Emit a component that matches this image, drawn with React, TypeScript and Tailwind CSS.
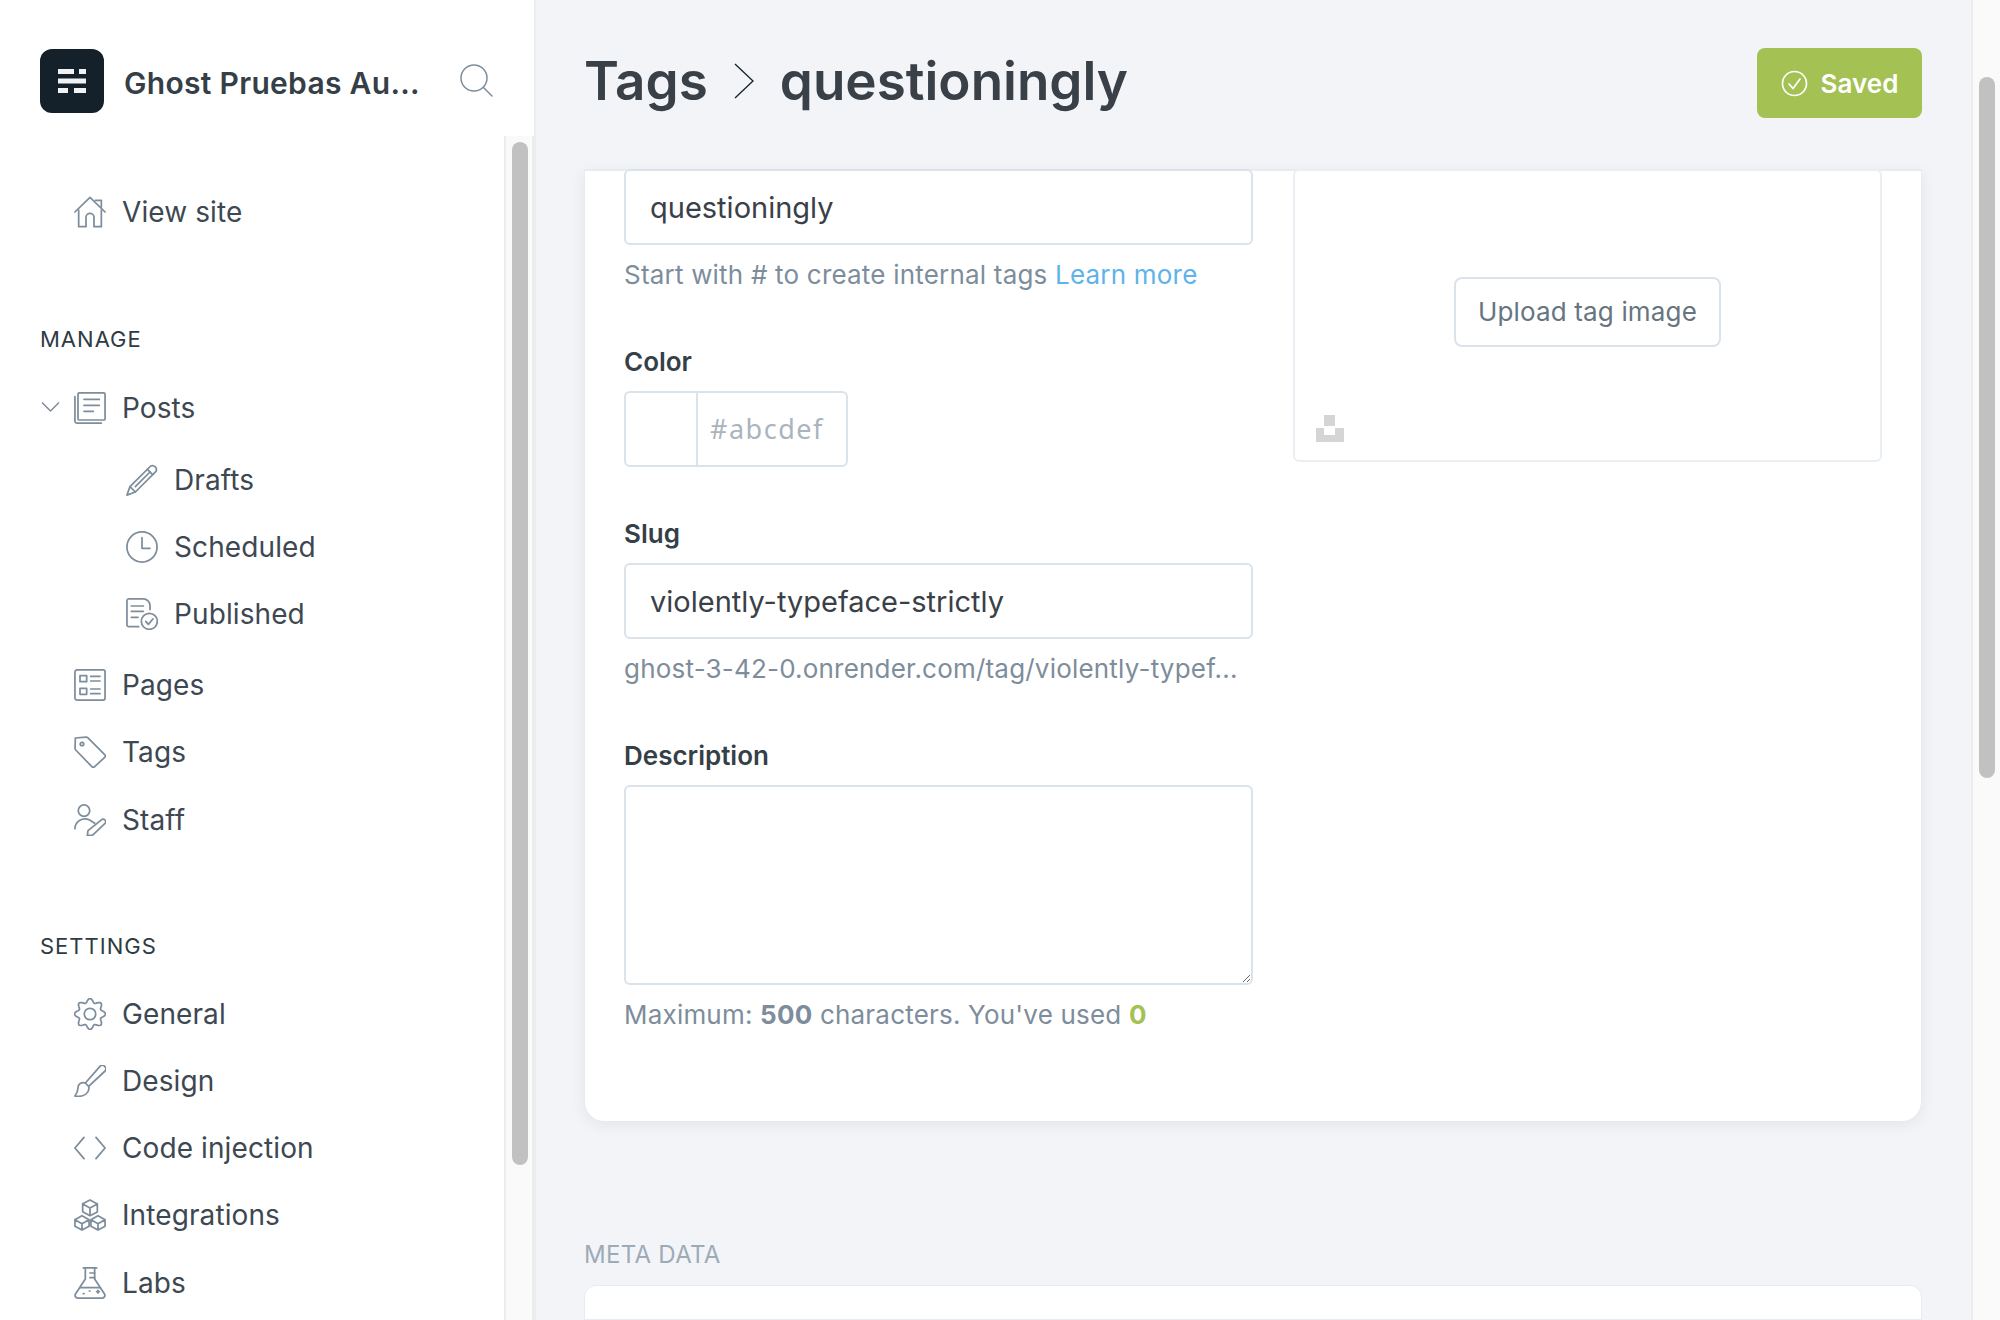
import React from "react";

const Ic = ({ children, size = 32 }: { children: React.ReactNode; size?: number }) => (
  <svg width={size} height={size} viewBox="0 0 24 24" fill="none" stroke="#7d8d9b" strokeWidth={1.3} strokeLinecap="round" strokeLinejoin="round" className="shrink-0">
    {children}
  </svg>
);

const gearPath = (() => {
  const pts: string[] = [];
  for (let i = 0; i < 120; i++) {
    const t = (i / 120) * Math.PI * 2;
    const r = 10.1 + 1.5 * Math.cos(8 * t);
    pts.push(`${(12 + r * Math.sin(t)).toFixed(2)} ${(12 - r * Math.cos(t)).toFixed(2)}`);
  }
  return `M${pts.join("L")}Z`;
})();

const icons: Record<string, React.ReactNode> = {
  home: <><path d="M.7 12 12 1l11.300 11" /><path d="M3.500 10.500V23H9v-7a3 3 0 0 1 6 0v7h5.500V10.500" /><path d="M16 3.200h4.500v5" /></>,
  posts: <><rect x="3" y=".7" width="20.300" height="20.300" rx="1" /><path d="M.7 3.500V22A1.500 1.500 0 0 0 2.200 23.300h18.300" /><path d="M7.500 5.500h11.500M7.500 10h11.500M7.500 14.500h7" /></>,
  drafts: <><path d="M18.500 1.500a3 3 0 0 1 4 4L7 21l-6.300 2.300L3 17z" /><path d="M16 4l4 4M3 17l4 4" /><path d="M7 17 18 6" /></>,
  clock: <><circle cx="12" cy="12" r="11.300" /><path d="M12 5v8h6" /></>,
  published: <><path d="M9.500 21.500H2A1.500 1.500 0 0 1 .7 20V2A1.500 1.500 0 0 1 2 .7h11a5 5 0 0 1 5 5v3" /><path d="M4 6h9M4 10h9M4 14.500h5" /><circle cx="17.500" cy="17.500" r="6" /><path d="M14.800 17.500l2 2.300 3.500-4.200" /></>,
  pages: <><rect x=".7" y=".7" width="22.600" height="22.600" rx="1.500" /><rect x="4.500" y="5" width="5" height="4.500" /><rect x="4.500" y="14.500" width="5" height="4.500" /><path d="M12.500 5.500h7M12.500 9h7M12.500 15h7M12.500 18.500h7" /></>,
  tag: <><path d="M1 1.500 9 .8a2 2 0 0 1 1.500.6l12.500 12.500a1.500 1.500 0 0 1 0 2.100l-7.500 7a1.500 1.500 0 0 1-2.100 0L1.300 10.500A2 2 0 0 1 .8 9z" /><circle cx="6" cy="6" r="1.300" /></>,
  staff: <><circle cx="7.500" cy="5" r="4.300" /><path d="M.7 18.500a7.500 7.500 0 0 1 11-6.500l3.800 2.500" /><path d="M21 11.500a2 2 0 0 1 2.500 2.800l-9.500 9-4 .5.500-3.800z" /></>,
  gear: <><circle cx="12" cy="12" r="4.300" /><path d={gearPath} /></>,
  brush: <><path d="M23 1a2.500 2.500 0 0 0-3.500 0L8.500 13.500l2.500 2.500L23.300 4.500A2.500 2.500 0 0 0 23 1z" /><path d="M8.500 13.500c-3-1-5.500 1-5.500 3.500 0 2.500-1 4.500-2.300 6.300 3.800.7 8-.3 9.800-3.300 1-2 .8-3 .5-4" /></>,
  code: <><path d="M7.500 4 .7 12l6.800 8" /><path d="M16.500 4l6.800 8-6.800 8" /></>,
  cubes: <><path d="M12 .7l5.500 3v6L12 12.500l-5.500-3v-6zM6.500 3.700 12 6.700l5.500-3M12 6.700v5.800" /><path d="M6 12.500l5.300 3v5L6 23.300.7 20.500v-5zM.7 15.500 6 18.500l5.300-3M6 18.500v4.800" /><path d="M18 12.500l5.300 3v5L18 23.300l-5.300-2.800v-5zM12.700 15.500l5.300 3 5.300-3M18 18.500v4.800" /></>,
  lab: <><path d="M7 .7h10M8.500.7v8.300L1 20.500a2 2 0 0 0 1.700 2.800h18.600a2 2 0 0 0 1.700-2.800L15.500 9V.7" /><path d="M15.500 4.500H12M15.500 8H12M4.500 15.500h15" /><path d="M17 18.500h2M18 17.500v2M11.500 18h.5M7 20h.5" /></>,
};

const Row = ({ icon, label, sub, h = "h-[67px]" }: { icon: string; label: string; sub?: boolean; h?: string }) => (
  <div className={`flex items-center ${h} ${sub ? "pl-[126px]" : "pl-[74px]"} gap-[16px] text-[28px] tracking-[0.1px] text-[#3d4852]`}>
    <Ic>{icons[icon]}</Ic>
    <span>{label}</span>
  </div>
);

const Heading = ({ children, className }: { children: React.ReactNode; className: string }) => (
  <div className={`pl-[40px] text-[22px] leading-[28px] tracking-[1px] text-[#2f3a42] ${className}`}>{children}</div>
);

const Field = "w-[629px] rounded-[6px] border-2 border-[#dae3ea] bg-white outline-none";
const Help = "text-[26px] leading-[32px] tracking-[0.2px] text-[#7d8d9b]";
const Label = "text-[26px] leading-[32px] font-semibold text-[#353f47]";

export default function App() {
  return (
    <div className="flex h-[1320px] w-[2000px] overflow-hidden bg-[#f3f4f8] [font-family:Inter,'Noto_Sans',sans-serif]">
      <aside className="flex h-full w-[536px] shrink-0 flex-col border-r-2 border-[#ebeef1] bg-white">
        <div className="flex h-[136px] shrink-0 items-start pl-[40px] pt-[49px]">
          <div className="flex h-[64px] w-[64px] items-center justify-center rounded-[12px] bg-[#15212a]">
            <svg width="30" height="30" viewBox="0 0 30 30" fill="#f0f2f4">
              <rect x="1" y="3" width="16" height="5" />
              <rect x="22" y="3" width="7" height="5" />
              <rect x="1" y="12.500" width="28" height="5" />
              <rect x="1" y="22" width="10" height="5" />
              <rect x="17" y="22" width="12" height="5" />
            </svg>
          </div>
          <div className="ml-[20px] mt-[16px] text-[30px] font-semibold leading-[36px] tracking-[0.3px] text-[#353f47]">Ghost Pruebas Au...</div>
          <svg className="ml-[40px] mt-[15px]" width="33" height="33" viewBox="0 0 33 33" fill="none" stroke="#7d8d9b" strokeWidth="1.500" strokeLinecap="round">
            <circle cx="14" cy="14" r="13" />
            <path d="M23.500 23.500 32 32" />
          </svg>
        </div>
        <div className="flex min-h-0 flex-1">
          <nav className="min-w-0 flex-1 overflow-hidden">
            <div className="pt-[42px]"><Row icon="home" label="View site" /></div>
            <Heading className="mt-[80px]">MANAGE</Heading>
            <div className="relative mt-[21px]">
              <svg className="absolute left-[41px] top-[27px]" width="19" height="12" viewBox="0 0 19 12" fill="none" stroke="#7d8d9b" strokeWidth="1.500"><path d="M1 1.500 9.500 10 18 1.500" /></svg>
              <Row icon="posts" label="Posts" />
            </div>
            <div className="pt-[5px]">
              <Row icon="drafts" label="Drafts" sub />
              <Row icon="clock" label="Scheduled" sub />
              <Row icon="published" label="Published" sub />
            </div>
            <div className="pt-[4px]">
              <Row icon="pages" label="Pages" />
              <Row icon="tag" label="Tags" h="h-[68px]" />
              <Row icon="staff" label="Staff" />
            </div>
            <Heading className="mt-[79px]">SETTINGS</Heading>
            <div className="mt-[20px]">
              <Row icon="gear" label="General" />
              <Row icon="brush" label="Design" />
              <Row icon="code" label="Code injection" />
              <Row icon="cubes" label="Integrations" h="h-[68px]" />
              <Row icon="lab" label="Labs" />
            </div>
          </nav>
          <div className="w-[30px] shrink-0 border-x-2 border-[#ececec] bg-[#fafafa] pl-[6px] pt-[6px]">
            <div className="h-[1023px] w-[16px] rounded-[8px] bg-[#c1c1c1]" />
          </div>
        </div>
      </aside>

      <main className="flex h-full min-w-0 flex-1 flex-col pl-[48px] pr-[49px]">
        <header className="flex h-[169px] shrink-0 items-start justify-between">
          <div className="mt-[47px] flex items-center text-[53px] font-semibold leading-[68px] text-[#394047]">
            <span>Tags</span>
            <svg className="ml-[26px] mr-[26px]" width="20" height="38" viewBox="0 0 20 38" fill="none" stroke="#15212a" strokeWidth="1.300"><path d="M1 2l18 17L1 36" /></svg>
            <span>questioningly</span>
          </div>
          <div className="mt-[48px] flex h-[70px] w-[165px] items-center justify-center gap-[13px] rounded-[8px] bg-[#a4c153] text-[26px] font-semibold text-white">
            <svg width="27" height="27" viewBox="0 0 27 27" fill="none" stroke="#fff" strokeWidth="1.700" strokeLinecap="round" strokeLinejoin="round"><circle cx="13.500" cy="13.500" r="12" /><path d="M8 14l4 4.500L19 9" /></svg>
            Saved
          </div>
        </header>

        <section className="flex h-[952px] shrink-0 items-start rounded-b-[20px] border-x border-t-2 border-[#e6ecf0] bg-white pl-[39px] shadow-[0_4px_14px_rgba(50,60,70,0.08)]">
          <div className="w-[629px]">
            <input readOnly value="questioningly" className={`${Field} -mt-[2px] block h-[76px] px-[24px] text-[29px] text-[#394047]`} />
            <div className={`${Help} mt-[14px]`}>
              Start with # to create internal tags <span className="text-[#5db3ea]">Learn more</span>
            </div>
            <div className={`${Label} mt-[55px]`}>Color</div>
            <div className="mt-[13px] flex h-[76px] w-[224px] overflow-hidden rounded-[6px] border-2 border-[#dae3ea]">
              <div className="h-full w-[72px] border-r-2 border-[#dae3ea]" />
              <div className="flex flex-1 items-center pl-[12px] text-[27px] tracking-[1.500px] text-[#abb4be] [font-family:'Noto_Sans',sans-serif]">#abcdef</div>
            </div>
            <div className={`${Label} mt-[51px]`}>Slug</div>
            <input readOnly value="violently-typeface-strictly" className={`${Field} mt-[13px] block h-[76px] px-[24px] text-[29px] text-[#394047]`} />
            <div className={`${Help} mt-[14px]`}>ghost-3-42-0.onrender.com/tag/violently-typef...</div>
            <div className={`${Label} mt-[55px]`}>Description</div>
            <textarea readOnly className={`${Field} mt-[13px] block h-[200px]`} />
            <div className={`${Help} mt-[14px]`}>
              Maximum: <b className="font-bold">500</b> characters. You've used <b className="font-bold text-[#a4c153]">0</b>
            </div>
          </div>
          <div className="relative ml-[40px] -mt-[2px] flex h-[293px] w-[589px] items-center justify-center rounded-[6px] border-2 border-[#eaeff3]">
            <div className="-mt-[8px] flex h-[70px] w-[267px] items-center justify-center rounded-[8px] border-2 border-[#dae3ea] text-[26px] tracking-[0.15px] text-[#66757f]">Upload tag image</div>
            <svg className="absolute bottom-[18px] left-[21px]" width="28" height="27" viewBox="0 0 28 27" fill="#d5d5d5">
              <rect x="8" y="0" width="11" height="11" />
              <path d="M0 13h8v7h11v-7h9v14H0z" />
            </svg>
          </div>
        </section>

        <div className="mt-[119px] text-[24px] leading-[30px] tracking-[0.3px] text-[#9dabb7]">META DATA</div>
        <section className="mt-[15px] min-h-0 flex-1 rounded-t-[12px] border border-[#e8ebef] bg-white" />
      </main>

      <div className="h-full w-[29px] shrink-0 border-l-2 border-[#ececec] bg-[#fafafa] pl-[6px] pt-[77px]">
        <div className="h-[701px] w-[16px] rounded-[8px] bg-[#c1c1c1]" />
      </div>
    </div>
  );
}
